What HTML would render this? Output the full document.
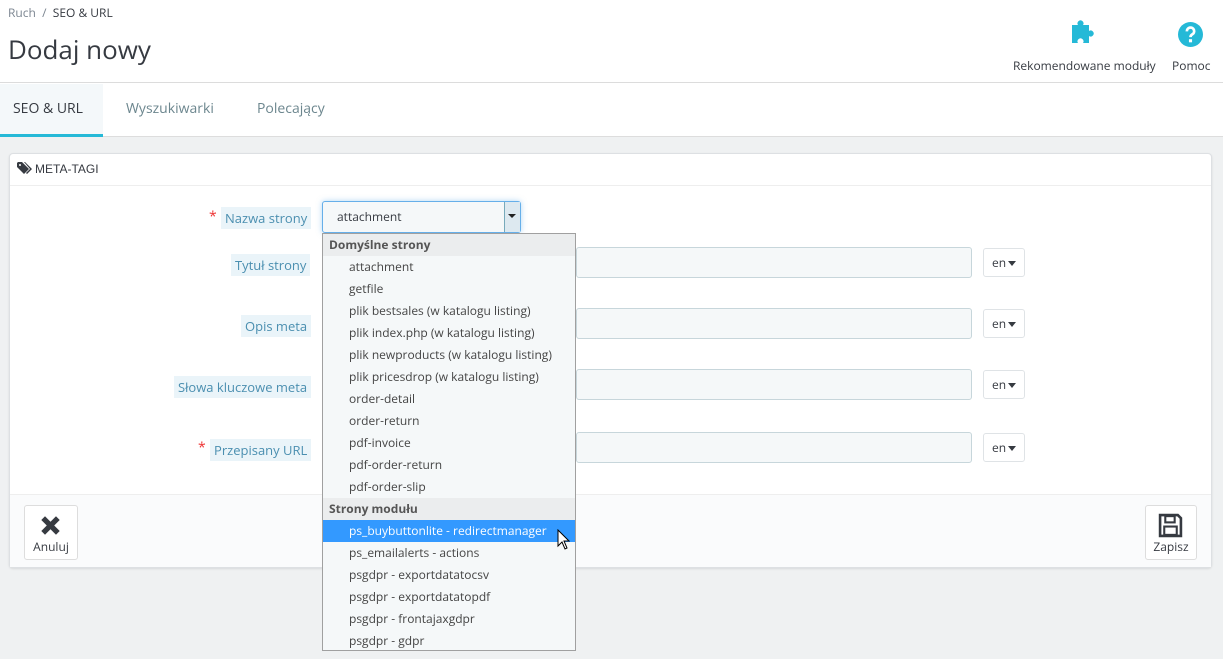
<!DOCTYPE html>
<html><head><meta charset="utf-8"><style>
*{box-sizing:border-box;margin:0;padding:0}
body{width:1223px;height:659px;overflow:hidden;background:#eff1f2;font-family:"Open Sans","DejaVu Sans","Liberation Sans",sans-serif;font-size:12px;color:#363a41;position:relative}
.a{position:absolute}
.top{left:0;top:0;width:1223px;height:83px;background:#fff;border-bottom:1px solid #dcdcdc}
.tabs{left:0;top:83px;width:1223px;height:54px;background:#fff;border-bottom:1px solid #ddd}
.tab{top:0;height:54px;line-height:52px;font-size:14px;color:#6c868e}
.panel{left:9px;top:153px;width:1203px;height:415px;background:#fff;border:1px solid #dde0e3;border-radius:4px;box-shadow:0 1px 2px rgba(0,0,0,.1)}
.lab{background:#eaf4f9;color:#4b8fb0;font-size:13px;padding:2px 4px;line-height:18px}
.inp{left:576px;width:396px;height:31px;background:#f5f8f9;border:1px solid #c7d6db;border-radius:3px}
.en{left:983px;width:42px;height:29px;border:1px solid #dfe3e6;border-radius:3px;background:#fff;font-size:12px;line-height:27px;padding-left:8px}
.en:after{content:"";position:absolute;left:24px;top:12px;border:4px solid transparent;border-top:5px solid #363a41}
.dd{left:322px;top:233px;width:254px;height:418px;background:#f5f8f9;border:1px solid #a0a0a0}
.it{position:absolute;left:0;width:252px;height:22px;line-height:22px;padding-left:26px;font-size:12px;color:#444}
.gh{padding-left:6px;font-weight:bold;background:#ebedee;color:#555}
</style></head><body>
<div class="a top"></div>
<div class="a" style="left:8px;top:4px;font-size:12px;color:#7b8590">Ruch &nbsp;/&nbsp; <span style="color:#363a41">SEO &amp; URL</span></div>
<div class="a" style="left:8px;top:31px;font-size:26px;color:#363a41">Dodaj nowy</div>
<svg class="a" style="left:1071px;top:20px" width="28" height="26" viewBox="0 0 28 26"><path d="M1 6h6a3 3 0 1 1 5 0h6v6a3 3 0 1 1 0 5v7h-6a3 3 0 1 0-5 0H1z" fill="#25b9d7" transform="translate(0,-1)"/></svg>
<div class="a" style="left:1013px;top:57px;font-size:12px">Rekomendowane moduły</div>
<svg class="a" style="left:1178px;top:22px" width="25" height="25" viewBox="0 0 24 24"><circle cx="12" cy="12" r="12" fill="#25b9d7"/><path d="M8.5 9a3.5 3.5 0 1 1 5 3c-1 .6-1.5 1-1.5 2.5" stroke="#fff" stroke-width="2.6" fill="none"/><rect x="10.5" y="16.5" width="3" height="3" fill="#fff"/></svg>
<div class="a" style="left:1172px;top:57px;font-size:12px">Pomoc</div>
<div class="a tabs"></div>
<div class="a" style="left:0;top:84px;width:103px;height:53px;background:#f4f8fa;border-bottom:3px solid #25b9d7"></div>
<div class="a tab" style="left:13px;top:83px;color:#363a41">SEO &amp; URL</div>
<div class="a tab" style="left:126px;top:83px">Wyszukiwarki</div>
<div class="a tab" style="left:257px;top:83px">Polecający</div>
<div class="a panel"></div>
<div class="a" style="left:10px;top:185px;width:1201px;border-top:1px solid #eee"></div>
<svg class="a" style="left:17px;top:162px" width="15" height="13" viewBox="0 0 15 13"><path d="M0 1v4l7 7 5-5-7-7H1z" fill="#363a41"/><path d="M8 0l7 7-5 5-1-1 4-4-6-7z" fill="#363a41"/><circle cx="3" cy="3" r="1" fill="#fff"/></svg>
<div class="a" style="left:35px;top:162px;font-size:12px;font-family:'Liberation Sans Narrow','Liberation Sans',sans-serif">META-TAGI</div>
<div class="a" style="left:10px;top:494px;width:1201px;height:73px;background:#fafbfc;border-top:1px solid #eee"></div>
<div class="a" style="left:24px;top:505px;width:54px;height:55px;border:1px solid #ddd;border-radius:3px;background:#fff;text-align:center;font-size:12px;padding-top:32px">Anuluj</div>
<svg class="a" style="left:40px;top:515px" width="21" height="21" viewBox="0 0 20 20"><path d="M3 3L17 17M17 3L3 17" stroke="#363a41" stroke-width="5"/></svg>
<div class="a" style="left:1145px;top:505px;width:52px;height:55px;border:1px solid #ddd;border-radius:3px;background:#fff;text-align:center;font-size:12px;padding-top:32px">Zapisz</div>
<svg class="a" style="left:1158px;top:513px" width="25" height="25" viewBox="0 0 24 24"><path d="M2 2h17l3 3v17H2z" fill="none" stroke="#363a41" stroke-width="2.5"/><rect x="7" y="3" width="9" height="6" fill="none" stroke="#363a41" stroke-width="2"/><rect x="6" y="13" width="12" height="8" fill="none" stroke="#363a41" stroke-width="2"/></svg>
<div class="a" style="left:209px;top:207px;color:#e33;font-size:14px">*</div>
<div class="a lab" style="left:221px;top:207px">Nazwa strony</div>
<div class="a lab" style="left:231px;top:254px">Tytuł strony</div>
<div class="a lab" style="left:241px;top:315px">Opis meta</div>
<div class="a lab" style="left:174px;top:376px">Słowa kluczowe meta</div>
<div class="a" style="left:198px;top:438px;color:#e33;font-size:14px">*</div>
<div class="a lab" style="left:210px;top:439px">Przepisany URL</div>
<div class="a inp" style="top:247px"></div><div class="a en" style="top:248px">en</div>
<div class="a inp" style="top:308px"></div><div class="a en" style="top:309px">en</div>
<div class="a inp" style="top:369px"></div><div class="a en" style="top:370px">en</div>
<div class="a inp" style="top:432px"></div><div class="a en" style="top:433px">en</div>
<div class="a" style="left:322px;top:201px;width:199px;height:32px;background:#f5f8f9;border:1px solid #66afe9;border-radius:3px;box-shadow:0 0 6px rgba(102,175,233,.5);padding-left:14px;line-height:30px;font-size:12px">attachment</div>
<div class="a" style="left:504px;top:202px;width:16px;height:30px;background:#dde9f0;border-left:1px solid #7ab"></div>
<div class="a" style="left:508px;top:214px;border:4px solid transparent;border-top:4px solid #222"></div>
<div class="a dd">
<div class="it gh" style="top:0">Domyślne strony</div>
<div class="it" style="top:22px">attachment</div>
<div class="it" style="top:44px">getfile</div>
<div class="it" style="top:66px">plik bestsales (w katalogu listing)</div>
<div class="it" style="top:88px">plik index.php (w katalogu listing)</div>
<div class="it" style="top:110px">plik newproducts (w katalogu listing)</div>
<div class="it" style="top:132px">plik pricesdrop (w katalogu listing)</div>
<div class="it" style="top:154px">order-detail</div>
<div class="it" style="top:176px">order-return</div>
<div class="it" style="top:198px">pdf-invoice</div>
<div class="it" style="top:220px">pdf-order-return</div>
<div class="it" style="top:242px">pdf-order-slip</div>
<div class="it gh" style="top:264px">Strony modułu</div>
<div class="it" style="top:286px;background:#3399ff;color:#fff">ps_buybuttonlite - redirectmanager</div>
<div class="it" style="top:308px">ps_emailalerts - actions</div>
<div class="it" style="top:330px">psgdpr - exportdatatocsv</div>
<div class="it" style="top:352px">psgdpr - exportdatatopdf</div>
<div class="it" style="top:374px">psgdpr - frontajaxgdpr</div>
<div class="it" style="top:396px">psgdpr - gdpr</div>
</div>
<svg class="a" style="left:557px;top:529px" width="13" height="21" viewBox="0 0 13 21"><path d="M1 1v16l4-4 3 7 2-1-3-7h5z" fill="#fff" stroke="#000"/></svg>
</body></html>
